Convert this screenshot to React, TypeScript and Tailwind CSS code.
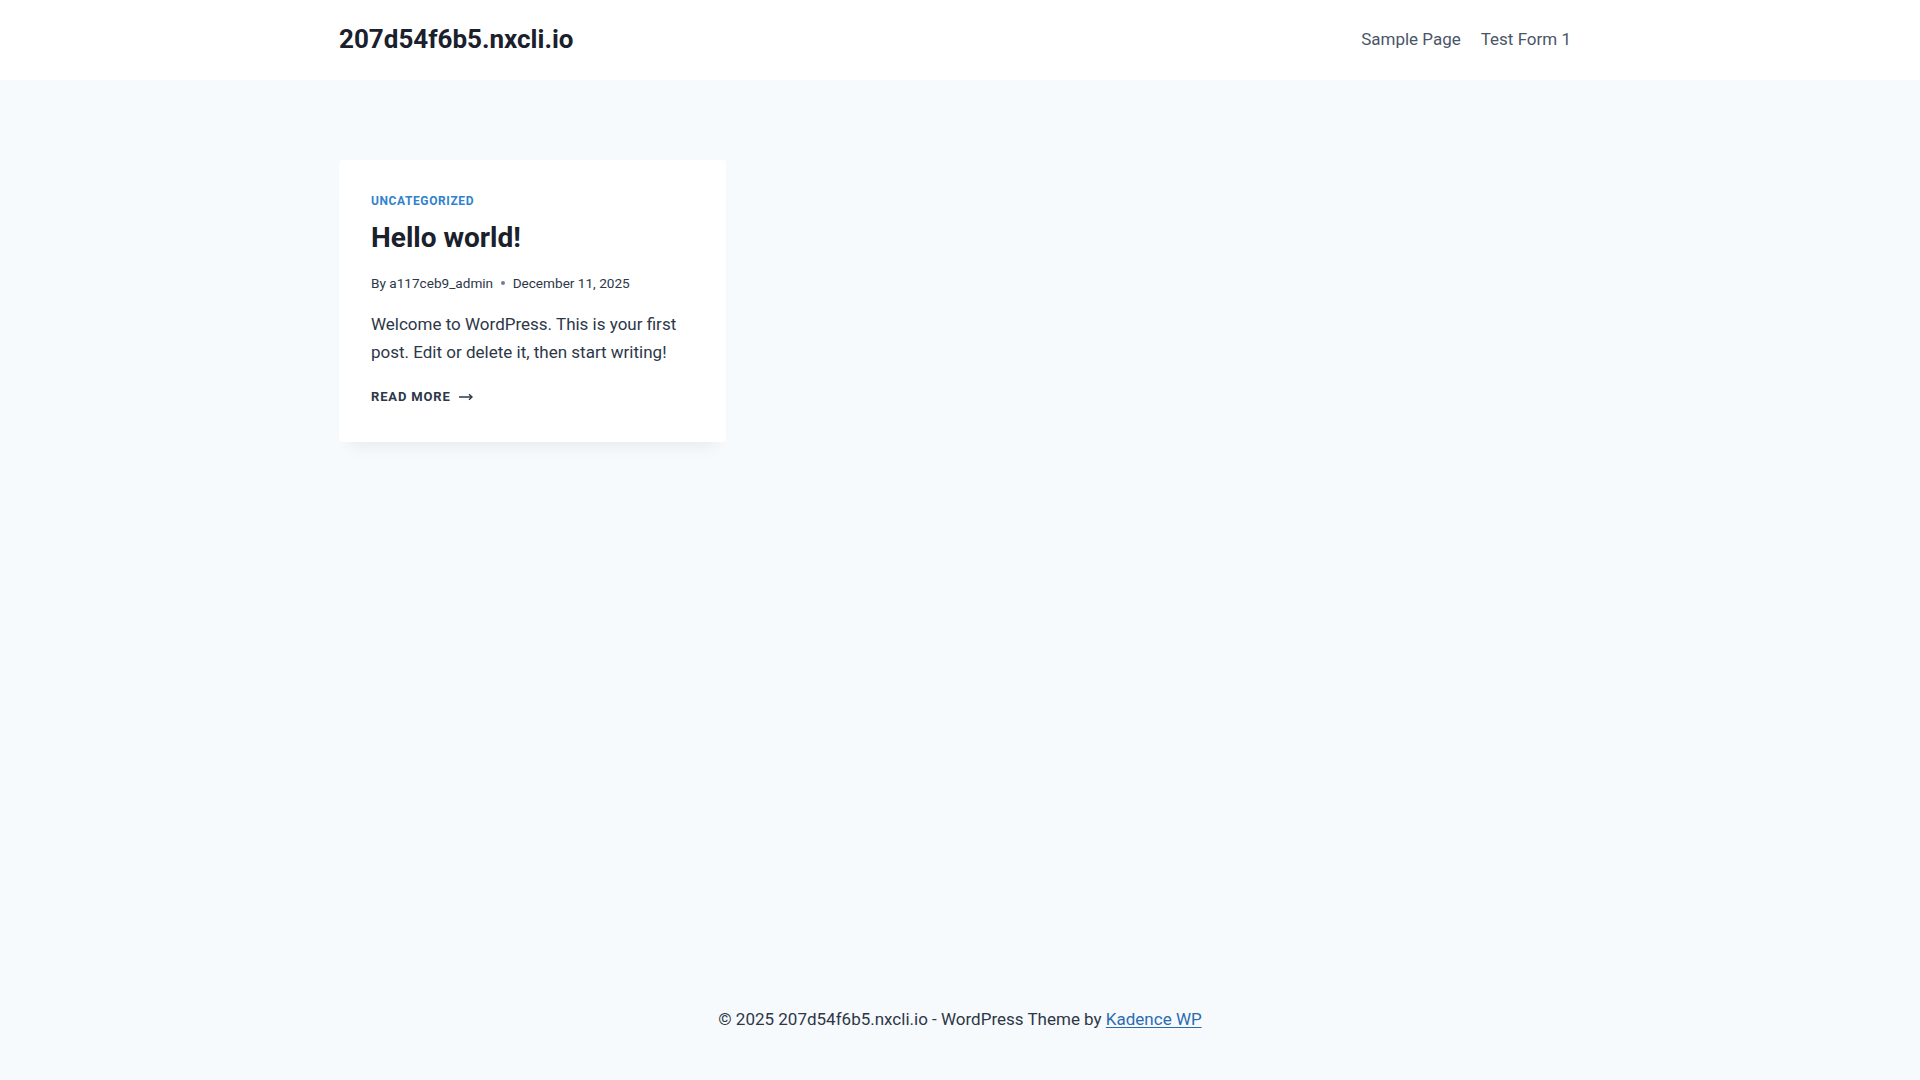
import React from 'react';

const ArrowRight: React.FC = () => (
  <svg width="14" height="8" viewBox="0 0 14 8" fill="none" className="ml-[8px]">
    <path d="M0 4h12.5" stroke="currentColor" strokeWidth="1.5" />
    <path d="M10 1.3l3 2.7-3 2.7" stroke="currentColor" strokeWidth="1.5" fill="none" />
  </svg>
);

const App: React.FC = () => {
  return (
    <div className="min-h-screen flex flex-col bg-[#F7FAFC] font-['Roboto',sans-serif] text-[#2D3748]">
      <header className="bg-white h-[80px]">
        <div className="max-w-[1290px] mx-auto px-6 h-full flex items-center justify-between">
          <a className="text-[26px] font-bold text-[#1A202C] leading-none pb-[2px]">207d54f6b5.nxcli.io</a>
          <nav className="flex items-center">
            <a className="px-[10px] py-[10px] text-[17px] text-[#4A5568]">Sample Page</a>
            <a className="px-[10px] py-[10px] text-[17px] text-[#4A5568]">Test Form 1</a>
          </nav>
        </div>
      </header>

      <main className="flex-1">
        <div className="max-w-[1290px] mx-auto px-6 pt-[80px]">
          <div className="grid grid-cols-3 gap-10">
            <article className="bg-white rounded-[4px] shadow-[0_15px_15px_-10px_rgba(0,0,0,0.06)] pt-[33px] px-8 h-[282px]">
              <div className="text-[12px] leading-4 font-bold uppercase tracking-[0.05em] text-[#3182CE]">
                Uncategorized
              </div>
              <h2 className="mt-2 text-[28px] leading-[42px] font-bold text-[#1A202C]">Hello world!</h2>
              <div className="mt-[13px] flex items-center text-[13.6px] leading-[22px] text-[#2D3748]">
                <span>By a117ceb9_admin</span>
                <span className="mx-[8px] w-[3.5px] h-[3.5px] rounded-full bg-[#718096]" />
                <span>December 11, 2025</span>
              </div>
              <p className="mt-4 text-[17px] leading-[28px] text-[#2D3748]">
                Welcome to WordPress. This is your first post. Edit or delete it, then start writing!
              </p>
              <a className="mt-5 flex items-center text-[13px] leading-[22px] font-bold uppercase tracking-[0.065em] text-[#2D3748]">
                Read More
                <ArrowRight />
              </a>
            </article>
          </div>
        </div>
      </main>

      <footer className="h-[120px] flex items-center justify-center">
        <p className="text-[17px] text-[#2D3748]">
          © 2025 207d54f6b5.nxcli.io - WordPress Theme by{' '}
          <a className="text-[#2B6CB0] underline underline-offset-2">Kadence WP</a>
        </p>
      </footer>
    </div>
  );
};

export default App;
